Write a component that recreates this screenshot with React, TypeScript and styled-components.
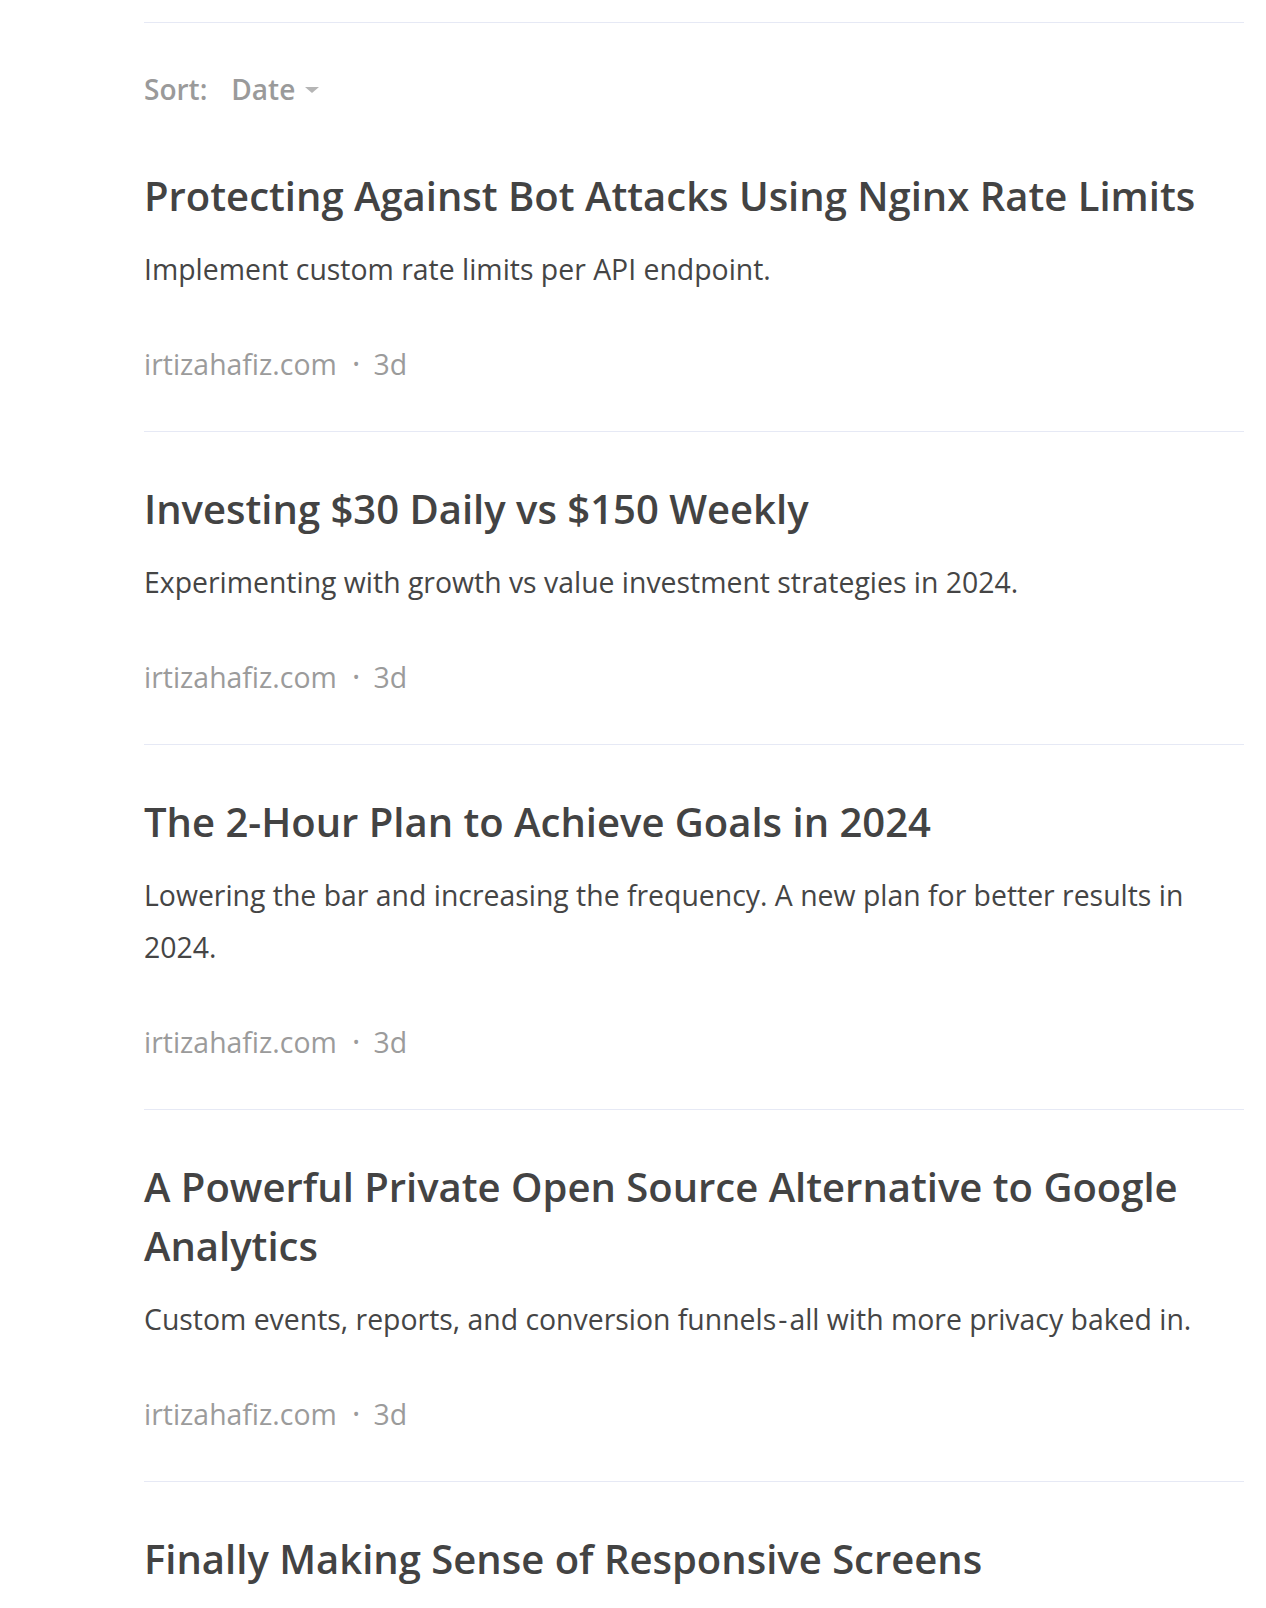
import React from "react";
import styled, { createGlobalStyle } from "styled-components";

const Global = createGlobalStyle`
  html, body { margin: 0; padding: 0; background: #ffffff; }
  body { font-family: "Open Sans", "Noto Sans", Arial, sans-serif; -webkit-font-smoothing: antialiased; }
`;

const Page = styled.main`
  padding-left: 144px;
  width: 1100px;
`;

const TopRule = styled.hr`
  margin: 22px 0 0;
  border: 0;
  border-top: 1px solid #e6e9f5;
  height: 0;
`;

const SortBar = styled.div`
  display: flex;
  align-items: center;
  gap: 24px;
  height: 40px;
  margin-top: 46px;
  margin-bottom: 10px;
  font-size: 28px;
  font-weight: 600;
  color: #9a9a9a;
`;

const SortLabel = styled.span``;

const SortButton = styled.button`
  display: inline-flex;
  align-items: center;
  gap: 10px;
  border: 0;
  background: none;
  padding: 0;
  font: inherit;
  color: inherit;
  cursor: pointer;
`;

const Caret = styled.span`
  width: 0;
  height: 0;
  border-left: 7px solid transparent;
  border-right: 7px solid transparent;
  border-top: 6px solid #b5b5b5;
  margin-top: 2px;
`;

const List = styled.ul`
  list-style: none;
  margin: 0;
  padding: 0;
`;

const Item = styled.li`
  padding: 47px 0 47px;
  border-bottom: 1px solid #e6e9f5;
`;

const Title = styled.h2`
  margin: 0 0 18px;
  font-size: 40px;
  line-height: 59px;
  font-weight: 600;
  color: #434343;
`;

const Desc = styled.p`
  margin: 0 0 49px;
  font-size: 28.4px;
  line-height: 52px;
  font-weight: 400;
  color: #454545;
`;

const Hyphen = styled.span`
  margin: 0 2px;
`;

const Meta = styled.div`
  display: flex;
  align-items: center;
  font-size: 28.4px;
  line-height: 40px;
  color: #9b9b9b;
`;

const Dot = styled.span`
  margin: 0 14px 0 16px;
  font-size: 18px;
`;

const posts: { title: string; desc: React.ReactNode }[] = [
  {
    title: "Protecting Against Bot Attacks Using Nginx Rate Limits",
    desc: "Implement custom rate limits per API endpoint.",
  },
  {
    title: "Investing $30 Daily vs $150 Weekly",
    desc: "Experimenting with growth vs value investment strategies in 2024.",
  },
  {
    title: "The 2-Hour Plan to Achieve Goals in 2024",
    desc: "Lowering the bar and increasing the frequency. A new plan for better results in 2024.",
  },
  {
    title: "A Powerful Private Open Source Alternative to Google Analytics",
    desc: (
      <>
        Custom events, reports, and conversion funnels<Hyphen>-</Hyphen>all with more privacy baked in.
      </>
    ),
  },
  {
    title: "Finally Making Sense of Responsive Screens",
    desc: "Understanding breakpoints, viewports, and device pixel ratios.",
  },
];

export default function App() {
  return (
    <Page>
      <Global />
      <TopRule />
      <SortBar>
        <SortLabel>Sort:</SortLabel>
        <SortButton>
          Date
          <Caret />
        </SortButton>
      </SortBar>
      <List>
        {posts.map((p) => (
          <Item key={p.title}>
            <Title>{p.title}</Title>
            <Desc>{p.desc}</Desc>
            <Meta>
              <span>irtizahafiz.com</span>
              <Dot>•</Dot>
              <span>3d</span>
            </Meta>
          </Item>
        ))}
      </List>
    </Page>
  );
}
